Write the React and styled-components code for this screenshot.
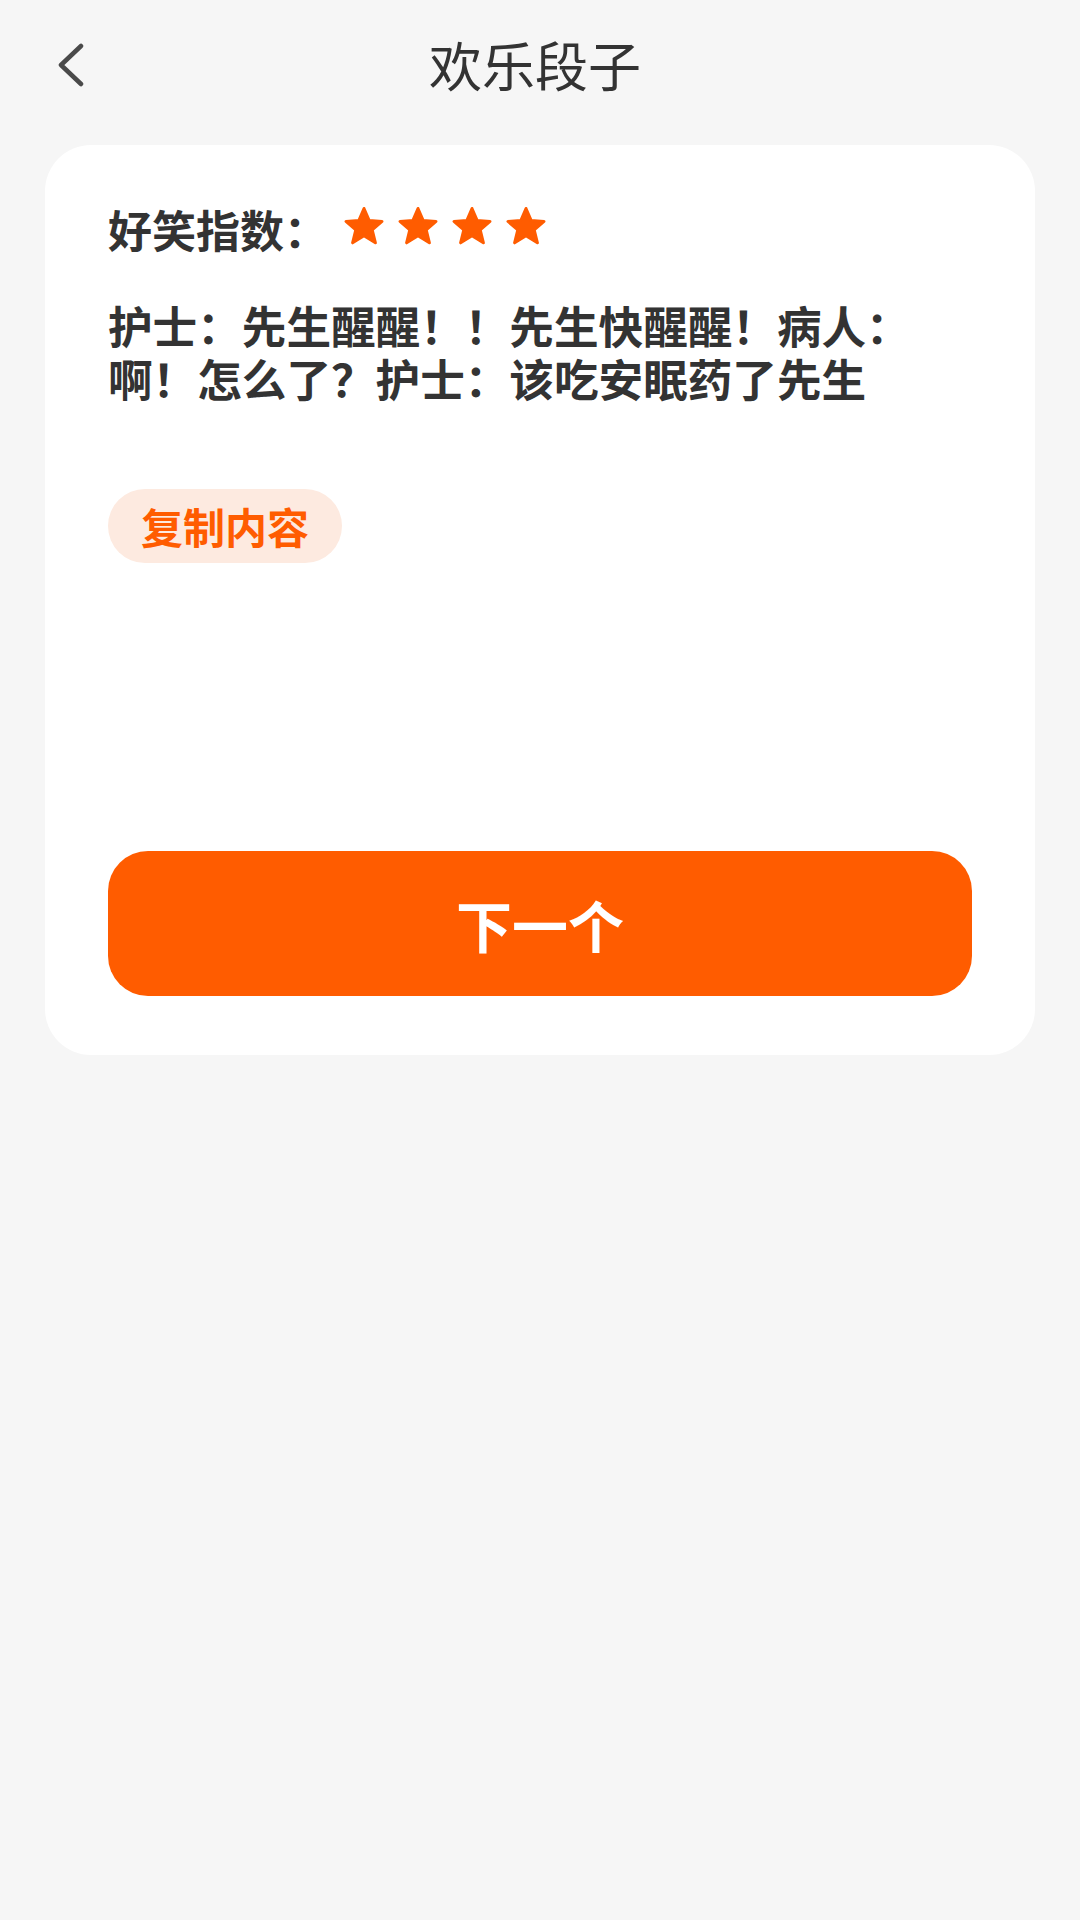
import React from "react";
import styled, { createGlobalStyle } from "styled-components";

const GlobalStyle = createGlobalStyle`
  html, body {
    margin: 0;
    padding: 0;
    background: #f6f6f6;
  }
  body {
    font-family: "Noto Sans CJK SC", "Noto Sans", sans-serif;
    color: #333333;
  }
  * { box-sizing: border-box; }
`;

const Page = styled.div`
  min-height: 1920px;
  background: #f6f6f6;
  padding: 0 45px;
  display: flex;
  flex-direction: column;
`;

const Header = styled.header`
  position: relative;
  height: 128px;
  display: flex;
  align-items: center;
  justify-content: center;
`;

const BackButton = styled.button`
  position: absolute;
  left: 8px;
  top: 42px;
  width: 36px;
  height: 46px;
  padding: 0;
  border: none;
  background: transparent;
  display: flex;
  align-items: center;
  justify-content: center;
`;

const Title = styled.h1`
  margin: 0;
  font-size: 53px;
  font-weight: 400;
  color: #333333;
  line-height: 1;
  transform: translateX(-5px);
`;

const Card = styled.section`
  margin-top: 17px;
  background: #ffffff;
  border-radius: 46px;
  padding: 56px 63px 59px;
  display: flex;
  flex-direction: column;
`;

const RatingRow = styled.div`
  display: flex;
  align-items: center;
  height: 56px;
`;

const Label = styled.span`
  font-size: 44px;
  font-weight: 700;
  color: #333333;
  line-height: 56px;
`;

const Stars = styled.div`
  display: flex;
  gap: 12px;
  margin-left: 15px;
  margin-top: -6px;
`;

const Joke = styled.p`
  margin: 41px 0 0;
  font-size: 44.6px;
  font-weight: 700;
  line-height: 53px;
  color: #333333;
`;

const CopyButton = styled.button`
  align-self: flex-start;
  margin-top: 85px;
  height: 74px;
  padding: 0 33px;
  border: none;
  border-radius: 37px;
  background: #fdeae0;
  color: #ff5c00;
  font-family: "Noto Sans CJK SC", sans-serif;
  font-size: 42px;
  font-weight: 700;
  line-height: 74px;
`;

const NextButton = styled.button`
  margin-top: 288px;
  height: 145px;
  width: 100%;
  border: none;
  border-radius: 40px;
  background: #ff5c00;
  color: #ffffff;
  font-family: "Noto Sans CJK SC", sans-serif;
  font-size: 56px;
  font-weight: 700;
`;

const Star = () => (
  <svg width="42" height="42" viewBox="0 0 42 42">
    <polygon
      points="21,3.5 26.2,15.6 39,16.4 29.2,24.9 32.4,37.8 21,30.8 9.6,37.8 12.8,24.9 3,16.4 15.8,15.6"
      fill="#ff5c00"
      stroke="#ff5c00"
      strokeWidth="3"
      strokeLinejoin="round"
    />
  </svg>
);

export default function App() {
  return (
    <>
      <GlobalStyle />
      <Page>
        <Header>
          <BackButton aria-label="返回">
            <svg width="30" height="44" viewBox="0 0 30 44">
              <polyline
                points="25,3 5,22 25,41"
                fill="none"
                stroke="#4a4a4a"
                strokeWidth="4.5"
                strokeLinecap="round"
                strokeLinejoin="round"
              />
            </svg>
          </BackButton>
          <Title>欢乐段子</Title>
        </Header>
        <Card>
          <RatingRow>
            <Label>好笑指数：</Label>
            <Stars>
              <Star />
              <Star />
              <Star />
              <Star />
            </Stars>
          </RatingRow>
          <Joke>护士：先生醒醒！！先生快醒醒！病人：啊！怎么了？护士：该吃安眠药了先生</Joke>
          <CopyButton>复制内容</CopyButton>
          <NextButton>下一个</NextButton>
        </Card>
      </Page>
    </>
  );
}
